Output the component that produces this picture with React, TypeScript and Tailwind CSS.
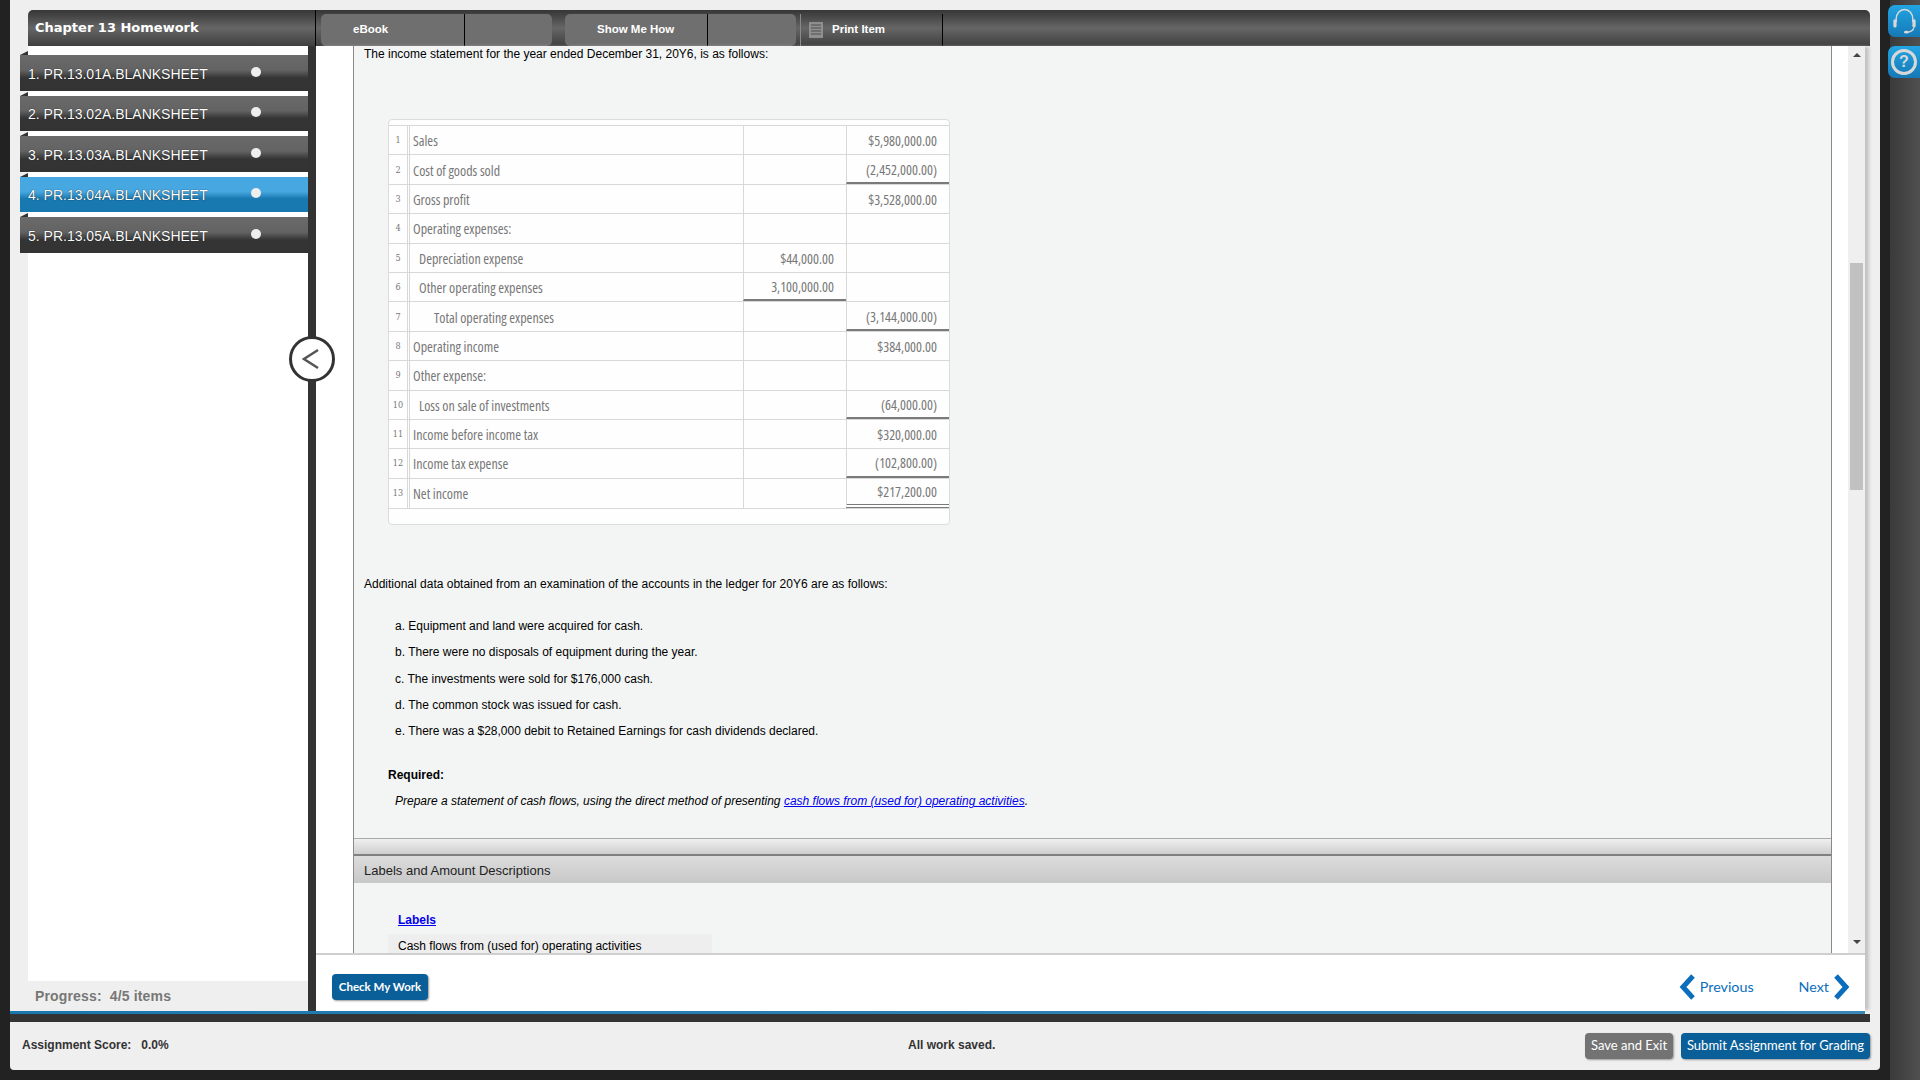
const navItems = [
  '1. PR.13.01A.BLANKSHEET',
  '2. PR.13.02A.BLANKSHEET',
  '3. PR.13.03A.BLANKSHEET',
  '4. PR.13.04A.BLANKSHEET',
  '5. PR.13.05A.BLANKSHEET',
];

type Row = { n: number; label: string; indent?: string; mid?: string; right?: string; midLine?: boolean; rightLine?: boolean; dbl?: boolean };

const rows: Row[] = [
  { n: 1, label: 'Sales', right: '$5,980,000.00' },
  { n: 2, label: 'Cost of goods sold', right: '(2,452,000.00)', rightLine: true },
  { n: 3, label: 'Gross profit', right: '$3,528,000.00' },
  { n: 4, label: 'Operating expenses:' },
  { n: 5, label: 'Depreciation expense', indent: 'pl-[6px]', mid: '$44,000.00' },
  { n: 6, label: 'Other operating expenses', indent: 'pl-[6px]', mid: '3,100,000.00', midLine: true },
  { n: 7, label: 'Total operating expenses', indent: 'pl-[21px]', right: '(3,144,000.00)', rightLine: true },
  { n: 8, label: 'Operating income', right: '$384,000.00' },
  { n: 9, label: 'Other expense:' },
  { n: 10, label: 'Loss on sale of investments', indent: 'pl-[6px]', right: '(64,000.00)', rightLine: true },
  { n: 11, label: 'Income before income tax', right: '$320,000.00' },
  { n: 12, label: 'Income tax expense', right: '(102,800.00)', rightLine: true },
  { n: 13, label: 'Net income', right: '$217,200.00', dbl: true },
];

const notes = [
  'a. Equipment and land were acquired for cash.',
  'b. There were no disposals of equipment during the year.',
  'c. The investments were sold for $176,000 cash.',
  'd. The common stock was issued for cash.',
  'e. There was a $28,000 debit to Retained Earnings for cash dividends declared.',
];

function IncomeTable() {
  return (
    <div className="mt-[57px] ml-[34px] w-[562px] h-[406px] bg-[#fefefe] border border-[#dcdcdc] rounded-[4px] pt-[5px] font-['Open_Sans',sans-serif] [font-stretch:75%] text-[14px] text-[#777]">
      {rows.map((r) => (
        <div key={r.n} className="flex h-[29.4px] border-t border-[#d8d8d8] items-stretch last:border-b last:h-[31px]">
          <div className="w-[18px] flex items-center justify-center text-[9px] font-['DejaVu_Serif',serif] text-[#777]">{r.n}</div>
          <div className="w-[336px] border-l-[3px] border-double border-[#d8d8d8] flex items-center pl-[3px] pt-[2px]">
            <span className={r.indent}>{r.label}</span>
          </div>
          <div className={`w-[103px] border-l border-[#d8d8d8] flex items-center justify-end pr-[12px] pt-[2px] ${r.midLine ? 'border-b-2 border-b-[#7a7a7a]' : ''}`}>
            {r.mid}
          </div>
          <div className={`flex-1 border-l border-[#d8d8d8] flex items-center justify-end pr-[12px] pt-[2px] ${r.rightLine ? 'border-b-2 border-b-[#7a7a7a]' : ''} ${r.dbl ? 'border-b-[4px] border-double border-b-[#7a7a7a]' : ''}`}>
            {r.right}
          </div>
        </div>
      ))}
    </div>
  );
}

function Content() {
  return (
    <div className="flex-1 bg-[#f3f5f5] border-x border-[#8a8a8a] overflow-hidden text-[12px] leading-[16px] text-black font-['Liberation_Sans',sans-serif]">
      <p className="pl-[10px]">The income statement for the year ended December 31, 20Y6, is as follows:</p>
      <IncomeTable />
      <p className="mt-[51px] pl-[10px]">Additional data obtained from an examination of the accounts in the ledger for 20Y6 are as follows:</p>
      <div className="mt-[26px] pl-[41px] flex flex-col gap-[10.25px]">
        {notes.map((t) => (
          <p key={t}>{t}</p>
        ))}
      </div>
      <p className="mt-[28px] pl-[34px] font-bold">Required:</p>
      <p className="mt-[10px] pl-[41px] italic">
        Prepare a statement of cash flows, using the direct method of presenting{' '}
        <a className="text-[#0000ee] underline">cash flows from (used for) operating activities</a>.
      </p>
      <div className="mt-[29px] h-[16px] border-t border-[#aaa] bg-gradient-to-b from-[#efefef] to-[#cfcfcf]" />
      <div className="h-[29px] border-t-2 border-[#808080] bg-gradient-to-b from-[#dcdcdc] to-[#c8c8c8] pl-[10px] pt-[2px] flex items-center text-[13px] text-[#222]">
        Labels and Amount Descriptions
      </div>
      <p className="mt-[29px] pl-[44px]">
        <a className="font-bold text-[#0000ee] underline">Labels</a>
      </p>
      <div className="mt-[6px] ml-[34px] w-[324px] h-[24px] bg-[#eeeeee] pl-[10px] pt-[4px]">Cash flows from (used for) operating activities</div>
    </div>
  );
}

function Sidebar() {
  return (
    <div className="w-[298px] pl-[18px] flex flex-col">
      <div className="flex-1 bg-white pt-[9px] flex flex-col gap-[5px]">
        {navItems.map((item, i) => (
          <div
            key={item}
            className={`relative -ml-[8px] h-[35.5px] flex items-center pt-[3px] pl-[8px] text-[14px] text-white font-['Liberation_Sans',sans-serif] [text-shadow:0_0_1px_#000] ${
              i === 3
                ? 'bg-[linear-gradient(#47a7e0_0%,#47a7e0_42%,#1878b0_62%,#1878b0_100%)]'
                : 'bg-[linear-gradient(#6a6a6a_0%,#636363_42%,#343434_64%,#333333_100%)]'
            }`}
          >
            <div className="absolute left-0 -top-[4px] border-b-[4px] border-l-[8px] border-b-[#333] border-l-transparent" />
            <span className="w-[222.5px]">{item}</span>
            <span className="w-[10px] h-[10px] rounded-full bg-[#eee] -mt-[5px]" />
          </div>
        ))}
      </div>
      <div className="h-[30px] flex items-center pl-[7px] text-[14px] font-bold text-[#777] font-['Liberation_Sans',sans-serif] tracking-[0.15px]">
        Progress:&nbsp; 4/5 items
      </div>
    </div>
  );
}

function Scrollbar() {
  return (
    <div className="relative w-[17px] bg-[#efefef] flex flex-col items-center justify-between pt-[7px] pb-[9px]">
      <div className="w-0 h-0 border-x-[4px] border-x-transparent border-b-[4px] border-b-[#444]" />
      <div className="absolute top-[217px] w-[13px] h-[227px] bg-[#c1c1c1]" />
      <div className="w-0 h-0 border-x-[4px] border-x-transparent border-t-[4px] border-t-[#444]" />
    </div>
  );
}

export default function App() {
  return (
    <div className="relative w-[1920px] h-[1080px] flex overflow-hidden bg-[#222222] font-['Liberation_Sans',sans-serif]">
      <div className="w-[10px]" />

      <div className="w-[1870px] h-[1070px] bg-[#efefef] rounded-b-[4px] flex flex-col pt-[10px]">
        {/* top bar */}
        <div className="ml-[18px] mr-[10px] h-[36px] rounded-t-[5px] bg-gradient-to-b from-[#363636] via-[#666666] to-[#404040] flex items-end text-white">
          <div className="w-[288px] h-full border-r border-black flex items-center pl-[7px] font-['DejaVu_Sans',sans-serif] font-bold text-[13px]">
            Chapter 13 Homework
          </div>
          <div className="pl-[5px] flex gap-[13px] h-[32px] items-stretch overflow-hidden">
            <div className="w-[231px] flex rounded-[5px] bg-[#6f6f6f] text-[11.5px] font-bold">
              <div className="w-[144px] border-r border-black flex items-center pl-[32px]">eBook</div>
            </div>
            <div className="w-[231px] flex rounded-[5px] bg-[#6f6f6f] text-[11.5px] font-bold">
              <div className="w-[143px] border-r border-black flex items-center pl-[32px]">Show Me How</div>
            </div>
          </div>
          <div className="ml-[4px] h-[32px] w-[143px] border-x border-l-[#8a8a8a] border-r-black flex items-center pl-[8px] gap-[9px] text-[11.5px] font-bold">
            <svg width="14" height="16" viewBox="0 0 14 16">
              <rect width="14" height="16" fill="#8f8f8f" />
              <path d="M2 3h10M2 6h10M2 9h10M2 12h10" stroke="#4f4f4f" strokeWidth="1.2" />
            </svg>
            Print Item
          </div>
        </div>

        {/* body */}
        <div className="h-[965px] flex">
          <Sidebar />
          <div className="w-[8px] bg-[#333333]" />
          <div className="flex-1 mr-[15px] flex flex-col shadow-[5px_0_3px_-1px_#c4c4c4]">
            <div className="h-[907px] bg-white pl-[37px] flex">
              <Content />
              <div className="w-[16px]" />
              <Scrollbar />
            </div>
            <div className="h-[2px] bg-[#cfcfcf]" />
            <div className="flex-1 bg-white flex items-center pl-[16px] pt-[7px] font-['Lato',sans-serif]">
              <button className="w-[96px] h-[26px] rounded-[4px] bg-[#0b5f99] shadow-[1px_1px_2px_#999] text-white text-[11.5px] font-bold">Check My Work</button>
              <div className="ml-auto mr-[15px] flex items-center text-[14.3px] text-[#0a6ebd]">
                <svg width="16" height="26" viewBox="0 0 16 26" fill="none" stroke="#0a6ebd" strokeWidth="5">
                  <path d="M14 2 4 13l10 11" />
                </svg>
                <span className="ml-[5px]">Previous</span>
                <span className="ml-[45px]">Next</span>
                <svg width="16" height="26" viewBox="0 0 16 26" fill="none" stroke="#0a6ebd" strokeWidth="5" className="ml-[5px]">
                  <path d="M2 2l10 11L2 24" />
                </svg>
              </div>
            </div>
          </div>
        </div>

        <div className="h-[3px] bg-gradient-to-r from-[#1a78b0] to-[#3a88b8] mr-[15px]" />
        <div className="h-[8px] bg-[#333333] mr-[10px]" />

        {/* footer */}
        <div className="flex-1 flex items-center pl-[12px] pr-[10px] text-[12px] font-bold text-[#333]">
          <div className="w-[886px] flex -mt-[2px]">
            <span>Assignment Score:</span>
            <span className="ml-[10px]">0.0%</span>
          </div>
          <span className="-mt-[2px]">All work saved.</span>
          <div className="ml-auto flex gap-[8px] font-['Lato',sans-serif] text-[13px] font-normal text-white">
            <button className="w-[88px] h-[26px] rounded-[4px] bg-[#737373] shadow-[1px_1px_2px_#999]">Save and Exit</button>
            <button className="w-[189px] h-[26px] rounded-[4px] bg-[#0b5f99] shadow-[1px_1px_2px_#999]">Submit Assignment for Grading</button>
          </div>
        </div>
      </div>

      <div className="w-[10px]" />
      <div className="w-[30px] bg-gradient-to-r from-[#3a3a3a] to-[#505050]" />

      {/* collapse handle */}
      <div className="absolute left-[289px] top-[336px] w-[46px] h-[46px] rounded-full bg-white border-[3px] border-[#333] flex items-center justify-center">
        <svg width="18" height="20" viewBox="0 0 18 20" fill="none" stroke="#555" strokeWidth="2.4" className="-ml-[3px]">
          <path d="M16 1 2 10l14 9" />
        </svg>
      </div>

      {/* help tiles */}
      <div className="absolute left-[1888px] top-[5px] w-[32px] flex flex-col gap-[9px]">
        <div className="h-[32px] rounded-l-[7px] bg-gradient-to-b from-[#22a5e4] to-[#1679b5] flex items-center justify-center">
          <svg width="25" height="26" viewBox="0 0 26 28" fill="none">
            <path d="M4 15V12C4 6 8 1.5 13 1.5s9 4.500 9 10.500v3" stroke="#d8d8d8" strokeWidth="1.6" />
            <rect x="1" y="12" width="3.5" height="9" rx="1.7" fill="#d8d8d8" />
            <rect x="21.5" y="12" width="3.5" height="9" rx="1.7" fill="#d8d8d8" />
            <path d="M23 21c0 3-4 5-7 5" stroke="#d8d8d8" strokeWidth="1.4" />
            <ellipse cx="15" cy="26" rx="2.6" ry="1.4" fill="#d8d8d8" />
          </svg>
        </div>
        <div className="h-[32px] rounded-l-[7px] bg-gradient-to-b from-[#22a5e4] to-[#1679b5] flex items-center justify-center">
          <div className="w-[26px] h-[26px] rounded-full border-[3px] border-[#d8d8d8] flex items-center justify-center text-[#d8d8d8] text-[16px] font-bold leading-none">?</div>
        </div>
      </div>
    </div>
  );
}
